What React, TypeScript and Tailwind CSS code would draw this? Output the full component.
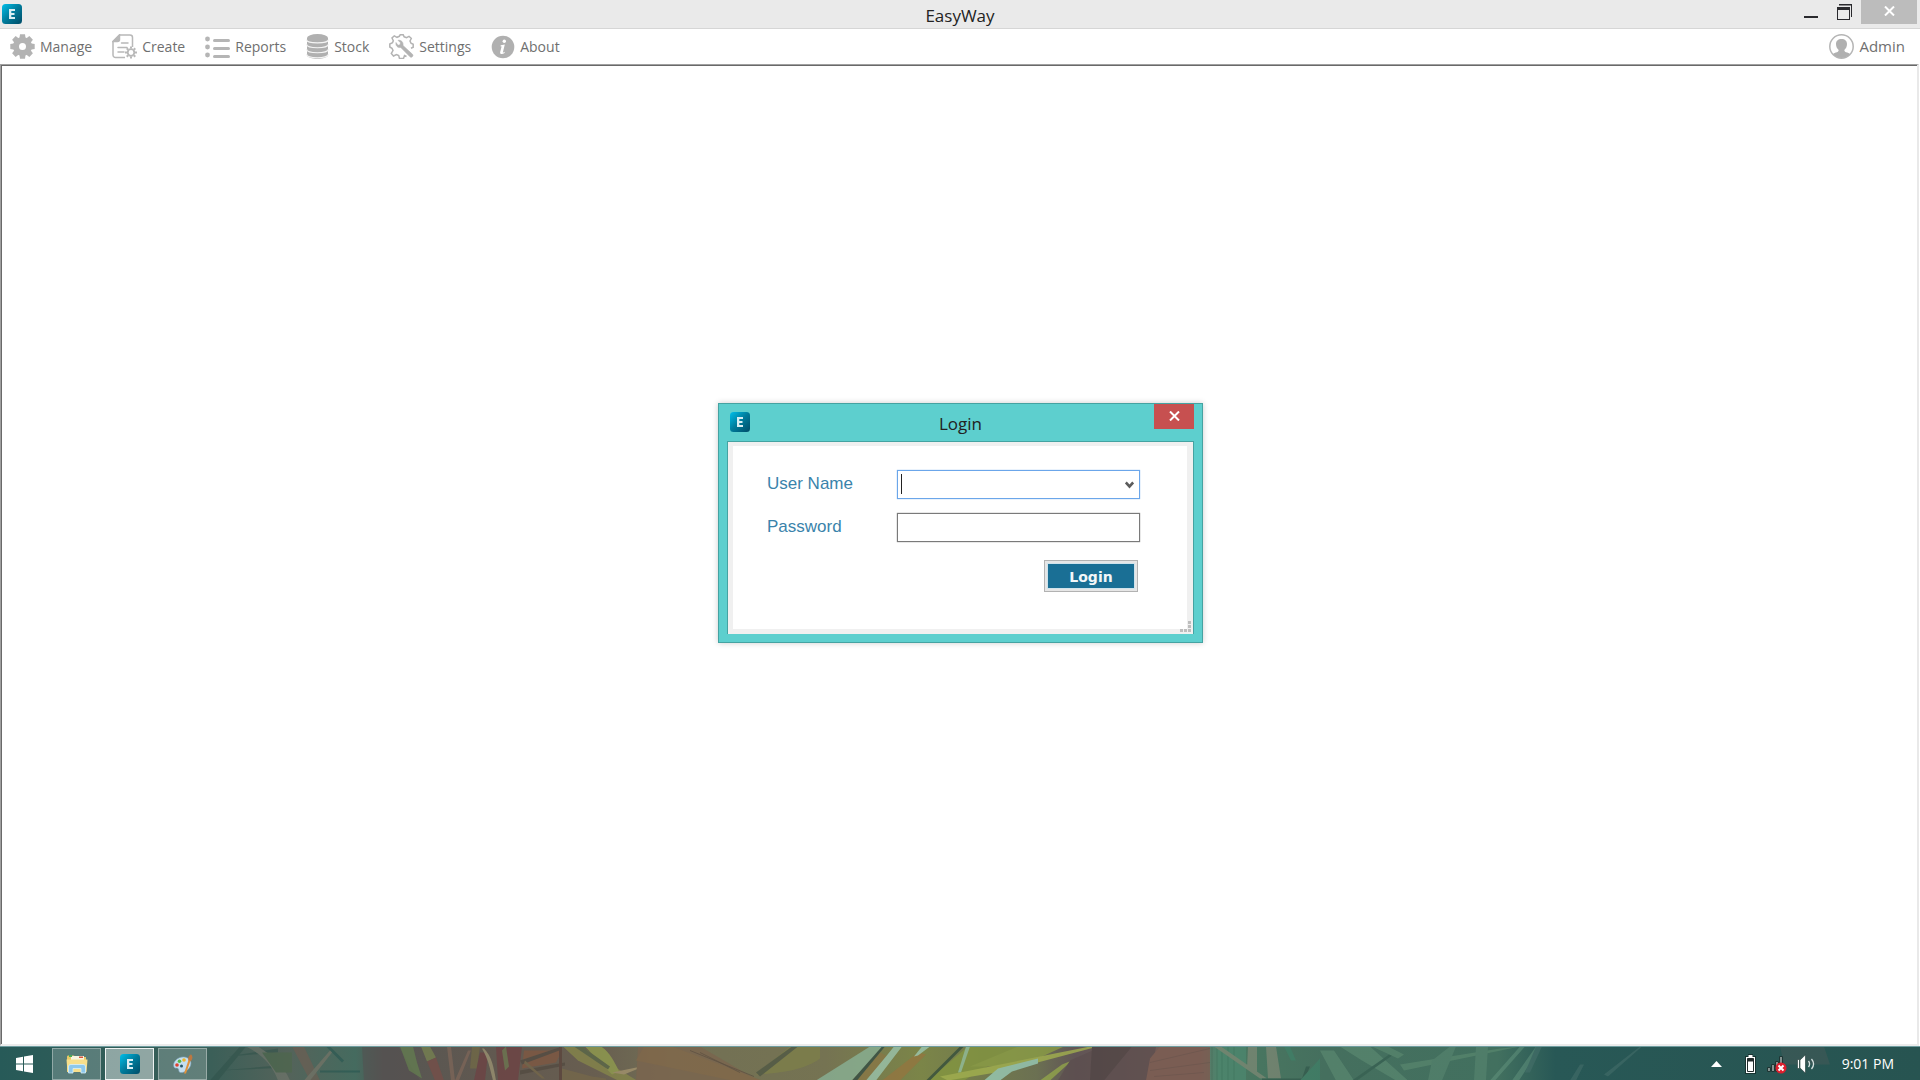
import { useState } from 'react';
import type { ReactNode } from 'react';

const SANS = "font-['Open_Sans','Noto_Sans',sans-serif]";

const AppLogo = () => (
  <svg width="20" height="20" viewBox="0 0 20 20" aria-hidden="true">
    <defs>
      <linearGradient id="logo" x1="0" y1="0" x2="1" y2="1">
        <stop offset="0" stopColor="#00bfea" />
        <stop offset="0.5" stopColor="#007a9a" />
        <stop offset="1" stopColor="#004c68" />
      </linearGradient>
    </defs>
    <rect width="20" height="20" rx="3.5" fill="url(#logo)" />
    <path d="M7 5h6v2H9.300v2h3.200v1.900H9.300v2.200H13V15H7z" fill="#d9eef3" />
  </svg>
);

const teeth = [0, 45, 90, 135, 180, 225, 270, 315];

const ManageIcon = () => (
  <svg width="25" height="25" viewBox="0 0 25 25" fill="#b3b3b3" aria-hidden="true">
    {teeth.map((deg) => (
      <path key={deg} d="M9.300 5 10 .3h5l.7 4.700z" transform={`rotate(${deg} 12.500 12.500)`} />
    ))}
    <circle cx="12.500" cy="12.500" r="6.500" fill="none" stroke="#b3b3b3" strokeWidth="6" />
  </svg>
);

const CreateIcon = () => (
  <svg width="25" height="25" viewBox="0 0 25 25" fill="none" stroke="#b8b8b8" strokeWidth="1.500" aria-hidden="true">
    <path d="M13 23.500H3.500a2.500 2.500 0 0 1-2.500-2.500V7.500L7.500 1H18a2.500 2.500 0 0 1 2.500 2.500V13" />
    <path d="M1 7.500 7.500 1v4.500a2 2 0 0 1-2 2z" fill="#b8b8b8" />
    <path d="M9.500 9H16M6 13.500h9M6 18h6" strokeLinecap="round" />
    <circle cx="19" cy="18.500" r="3.300" strokeWidth="1.800" />
    {teeth.map((deg) => (
      <path key={deg} d="M19 14.500v-2" strokeWidth="2" transform={`rotate(${deg} 19 18.500)`} />
    ))}
  </svg>
);

const ReportsIcon = () => (
  <svg width="25" height="25" viewBox="0 0 25 25" fill="#b5b5b5" aria-hidden="true">
    {[6, 14, 22].map((y) => (
      <g key={y}>
        <circle cx="2.500" cy={y - 1} r="2.400" />
        <rect x="8" y={y - 1} width="17" height="3" rx="1.500" />
      </g>
    ))}
  </svg>
);

const StockIcon = () => (
  <svg width="23" height="25" viewBox="0 0 23 25" aria-hidden="true">
    <path d="M1 4v17c0 5 21 5 21 0V4z" fill="#b0b0b0" />
    <g fill="none" stroke="#f4f4f4" strokeWidth="1.200">
      <path d="M.5 5.500c0 4.500 22 4.500 22 0M.5 10c0 5 22 5 22 0M.5 15c0 5 22 5 22 0M.5 20c0 5 22 5 22 0" />
    </g>
    <ellipse cx="11.500" cy="4" rx="10.500" ry="4" fill="#b0b0b0" />
  </svg>
);

const SettingsIcon = () => (
  <svg width="25" height="25" viewBox="0 0 25 25" fill="none" stroke="#b3b3b3" aria-hidden="true">
    <path
      d="M17.500 22.500l-2-1-1 3h-4l-.8-3-2.200-1L4.500 22 2.300 19.500l1.700-3-1-2.200L.8 13v-3l2.700-1.200.8-2L3 4l2.300-2.200L8 3.300l2.300-1L11.200.8h3l1 2 2.300.8L20 2.300 22.300 4.500 21 7l1 2.300 2.200 1v3l-2.200 1"
      strokeWidth="1.500"
    />
    <path
      d="M7 8.500c-.6 3 1.500 5.500 4.800 5l9.200 9.300c1.500 1.500 4-1 2.500-2.500L14 11.500c.6-3.500-2-5.800-5-5.200l2.500 2.500-.5 2-2 .5z"
      fill="#b3b3b3"
      strokeWidth=".6"
    />
  </svg>
);

const AboutIcon = () => (
  <svg width="24" height="24" viewBox="0 0 24 24" aria-hidden="true">
    <circle cx="12" cy="12" r="11.300" fill="#b0b0b0" />
    <circle cx="13.300" cy="6.200" r="1.700" fill="#fff" />
    <path d="M9.800 10.200l4-.7-2 8.200 2-.9-.3 1.200c-2 1.500-5 1.500-4.300-1l1.400-5.600-1.200-.2z" fill="#fff" />
  </svg>
);

const UserIcon = () => (
  <svg width="25" height="25" viewBox="0 0 25 25" aria-hidden="true">
    <circle cx="12.500" cy="12.500" r="11.700" fill="#fff" stroke="#b5b5b5" strokeWidth="1.500" />
    <path
      d="M12.500 5c3.500 0 5.500 2 5.500 5 0 2.500-1 4.500-2.700 6 .2 1.500 1 2 3 2.600 1.500.5 2.400 1 2.700 1.900-4.500 4.600-12.500 4.600-17 0 .3-.9 1.200-1.400 2.700-1.900 2-.6 2.800-1.100 3-2.600C8 14.500 7 12.500 7 10c0-3 2-5 5.500-5z"
      fill="#b0b0b0"
    />
  </svg>
);

const WindowsIcon = () => (
  <svg width="17" height="18" viewBox="0 0 17 18" fill="#fff" aria-hidden="true">
    <path d="M0 3 7 1.800V8.500H0zM8 1.600 17 0v8.500H8zM0 9.500h7v6.700L0 15zM8 9.500h9V18l-9-1.600z" />
  </svg>
);

const FolderIcon = () => (
  <svg width="22" height="20" viewBox="0 0 22 20" aria-hidden="true">
    <path d="M1 3c0-1 .5-1.500 1.500-1.500H8L9 3h11v15H1z" fill="#e8c866" />
    <path d="M5 2h13v5H5z" fill="#f8f4df" />
    <path d="M3 1h3v2H3z" fill="#49a957" />
    <path d="M13 2.500h4v1.500h-4z" fill="#d8523c" />
    <path d="M.5 5.500h21L20.500 18h-19z" fill="#f7df8b" />
    <path
      d="M2.500 19v-6c0-1.700.8-2.500 2.500-2.500h12c1.700 0 2.500.8 2.500 2.500v6H15v-4.500H7V19z"
      fill="#8dc8ec"
      stroke="#d8f0fb"
      strokeWidth=".8"
    />
  </svg>
);

const PaintIcon = () => (
  <svg width="20" height="20" viewBox="0 0 20 20" aria-hidden="true">
    <path
      d="M1 13C-1 8 5 2.500 11 3c5 .5 8 4 6.500 8.500S11 19 7.500 18.500c-2.500-.4-1-3-2.500-4s-3 .5-4-1.500z"
      fill="#c4dff0"
      stroke="#7fa6c0"
      strokeWidth=".6"
    />
    <circle cx="4" cy="11" r="1.800" fill="#e0412f" />
    <circle cx="6.500" cy="7.300" r="1.800" fill="#57b947" />
    <circle cx="11" cy="6" r="1.800" fill="#f0b429" />
    <circle cx="8.500" cy="12" r="1.500" fill="#28596b" />
    <path d="M11 19.500 15.500 6l2 .7L13 19.500z" fill="#e2923a" />
    <path d="M15.300 6.500c-.6-2.500 0-4.500 2.700-6.300 1.800 1.800 2 4.500 0 6.800z" fill="#bd7841" />
  </svg>
);

const Wallpaper = () => (
  <svg
    className="absolute inset-0 h-full w-full"
    viewBox="0 0 1920 34"
    preserveAspectRatio="xMidYMid slice"
    aria-hidden="true"
  >
    <defs>
      <linearGradient id="wall" x1="0" x2="1">
        <stop offset="0" stopColor="#275a58" />
        <stop offset="0.110" stopColor="#3b5f58" />
        <stop offset="0.150" stopColor="#54635a" />
        <stop offset="0.185" stopColor="#456b5f" />
        <stop offset="0.200" stopColor="#565653" />
        <stop offset="0.250" stopColor="#605850" />
        <stop offset="0.310" stopColor="#685e50" />
        <stop offset="0.350" stopColor="#727055" />
        <stop offset="0.430" stopColor="#757352" />
        <stop offset="0.480" stopColor="#7b8548" />
        <stop offset="0.540" stopColor="#6b7052" />
        <stop offset="0.560" stopColor="#615556" />
        <stop offset="0.600" stopColor="#715b55" />
        <stop offset="0.625" stopColor="#715b55" />
        <stop offset="0.635" stopColor="#4a7961" />
        <stop offset="0.690" stopColor="#456f5e" />
        <stop offset="0.780" stopColor="#42705f" />
        <stop offset="0.810" stopColor="#285856" />
        <stop offset="1" stopColor="#275451" />
      </linearGradient>
    </defs>
    <rect width="1920" height="34" fill="url(#wall)" />

    {/* left: dark blades */}
    <g opacity=".5">
      <path d="M210 34 240 0h6l-28 34zM228 10l50-8v4zM220 24l70-6v3z" fill="#2e5149" />
      <path d="M246 0h12c16 10 26 20 32 34h-12C272 18 262 8 246 0z" fill="#7a7b70" />
      <path d="M262 6h30v20h-16z" fill="#4c6847" />
      <path d="M292 0h12l16 34h-10z" fill="#785c50" />
      <path d="M320 24h40v2h-40zM330 0l14 14-2 2-16-16z" fill="#21534f" />
      <path d="M362 0h36l22 34h-56z" fill="#554f50" />
      <path d="M304 34 330 4l2 2-22 28z" fill="#87796b" />
    </g>

    {/* red and green stalks */}
    <g opacity=".65">
      <path d="M400 0h13l4 16 5 16-13-8z" fill="#66844f" />
      <path d="M421 0h9l6 11-9 4z" fill="#7c8a50" />
      <path d="M427 15l9-4 8 23h-9z" fill="#7c4d47" />
      <path d="M447 0h4l4 34h-4zM455 34 468 4h3l-12 30z" fill="#83685a" />
      <path d="M472 0h8l-3 22h-7z" fill="#746c44" />
      <path d="M474 34 480 6h8l-3 28zM496 0h26l-4 34h-20z" fill="#703e42" />
      <path d="M484 2c8 8 10 20 12 32h-3c-3-12-5-22-11-32z" fill="#a59d78" />
      <path d="M502 4l4-4 3 20-4 4z" fill="#6f7b4f" />
      <path d="M524 4h38l-6 12-34 6z" fill="#85573f" />
      <path d="M520 14 562 0v3l-40 15zM520 24l45-8v3l-45 9z" fill="#50483f" />
      <path d="M559 0h3v34h-3z" fill="#594039" />
      <path d="M525 14l20 18h-3l-18-15zM562 22l30 8 14 2v2h-44z" fill="#786a49" />
    </g>

    {/* centre: bright leaves */}
    <g opacity=".75">
      <path d="M563 0h18l56 34h-19l-40-20z" fill="#87884a" />
      <path d="M585 0h16c8 5 13 14 18 25l-7 3z" fill="#93a04e" />
      <path d="M574 0h8l28 20-2 3z" fill="#596847" />
      <path d="M612 26l34-7-22 9z" fill="#a6956f" />
      <path d="M638 0h62l58 34H636z" fill="#7c644e" />
      <path d="M636 14 644 0h28l90 34h-30z" fill="#836749" />
      <path d="M756 28 790 0h30v12c-14 10-32 14-64 16z" fill="#7e8049" />
      <path d="M756 26 792 0h6l-38 30z" fill="#4e5744" />
      <path d="M690 4l64 26M700 6l40 20" stroke="#58483c" strokeWidth=".8" />
      <path d="M816 34 870 0h14l-32 34z" fill="#8ab59a" />
      <path d="M852 34 880 6l8 4-22 24z" fill="#8a7745" />
      <path d="M852 34 882 0h3l-28 34z" fill="#2f4a43" />
      <path d="M866 34 886 10l8-10h8l-26 34z" fill="#9dc9b3" />
      <path d="M882 34 918 6l8 2-26 26z" fill="#95753f" />
      <path d="M914 10 922 0h8l-12 9z" fill="#a0ccb8" />
      <path d="M928 34 968 0h52l-56 34z" fill="#84973f" />
      <path d="M926 34 960 0h4l-34 34z" fill="#314b3b" />
      <path d="M958 26 966 0h4l-9 26z" fill="#95c2a1" />
      <path d="M970 20h50l44-20h-46z" fill="#8da044" />
      <path d="M940 30 1090 0h8l-90 24-60 10z" fill="#a6b54e" />
      <path d="M984 34l14-12 40-10v5l-26 8-12 9z" fill="#9bd0bd" />
      <path d="M1040 34 1062 18l10-4-22 20z" fill="#95a94a" />
      <path d="M1070 14 1102 0h54l-6 34h-92z" fill="#5c4e4f" />
      <path d="M1092 0h40l-28 34h-14z" fill="#4f4444" />
      <path d="M1150 12 1160 0h50v34h-64z" fill="#7e5e53" />
      <path d="M1150 24l60-8M1150 16l60-14M1154 30l50-4" stroke="#625049" strokeWidth=".5" />
    </g>

    {/* right: green fan */}
    <g opacity=".45">
      <path d="M1210 0h36v34h-36z" fill="#4f9279" />
      <path d="M1212 0v34M1217 0v34M1222 0v34M1228 0v34M1234 0v34" stroke="#34705d" strokeWidth=".7" />
      <path d="M1214 0h7l46 32h-7zM1248 0h9v28l-10-5zM1266 0h10l5 32h-13z" fill="#a09482" />
      <path d="M1262 32h40l4-12h4l-6 14h-42z" fill="#274b41" />
      <path d="M1284 0h6l6 14h-5zM1300 34 1320 12v22z" fill="#3b896d" />
      <path d="M1320 4h14l20 30h-18zM1340 0h30l38 34h-12L1362 14z" fill="#66967a" />
      <path d="M1352 34 1392 6l3 1-38 27z" fill="#2d5548" />
      <path d="M1372 0h16l16 8-6 4zM1400 18 1500 2l20-2-116 24z" fill="#659477" />
      <path d="M1432 14 1450 0h6l-14 34h-14zM1476 0h12l-2 34h-12z" fill="#5f8d76" />
      <path d="M1490 34 1520 0h5l-30 34zM1512 34 1536 0h5l-22 34z" fill="#699b83" />
      <path d="M1536 0h6l-12 26h-5zM1604 28 1640 0h2l-34 30zM1570 34 1580 18h4l-8 16z" fill="#4c7470" />
      <path d="M1780 0h44l6 18h-46z" fill="#4c5c59" />
    </g>
  </svg>
);

const menuItems: { label: string; icon: ReactNode }[] = [
  { label: 'Manage', icon: <ManageIcon /> },
  { label: 'Create', icon: <CreateIcon /> },
  { label: 'Reports', icon: <ReportsIcon /> },
  { label: 'Stock', icon: <StockIcon /> },
  { label: 'Settings', icon: <SettingsIcon /> },
  { label: 'About', icon: <AboutIcon /> },
];

const CloseMark = () => (
  <svg width="11" height="10" viewBox="0 0 11 10" stroke="#fff" strokeWidth="2">
    <path d="M1 .5 10 9.500M10 .5 1 9.500" />
  </svg>
);

const TitleBar = () => (
  <header className="grid h-[29px] grid-cols-[1fr_auto_1fr] border-b border-[#d6d6d6] bg-[#eaeaea]">
    <div className="pt-1 pl-0.5">
      <AppLogo />
    </div>
    <h1 className="pt-1 text-[17px] leading-6 text-[#222]">EasyWay</h1>
    <div className="flex items-start justify-end pr-[3px]">
      <button type="button" aria-label="Minimize" className="flex h-6 w-8 items-center justify-center">
        <svg width="14" height="16" viewBox="0 0 14 16">
          <path d="M0 12h14v2H0z" fill="#2a2a2e" />
        </svg>
      </button>
      <button type="button" aria-label="Restore" className="flex h-6 w-[34px] items-center justify-center">
        <svg width="15" height="16" viewBox="0 0 15 16" fill="#2a2a2e">
          <path d="M2 0h13v13h-1V1.500H2zM0 3h13v13H0zM1 6v9h11V6z" fillRule="evenodd" />
        </svg>
      </button>
      <button type="button" aria-label="Close" className="flex h-6 w-14 items-center justify-center bg-[#bcbcbc] pb-0.5">
        <CloseMark />
      </button>
    </div>
  </header>
);

const MenuBar = () => (
  <nav className="flex h-[35px] items-center justify-between bg-white pr-[15px] pl-2.5 text-[#6f6f6f]">
    <div className="flex items-center gap-5 text-sm">
      {menuItems.map((item) => (
        <button key={item.label} type="button" className="flex items-center gap-[5px]">
          {item.icon}
          {item.label}
        </button>
      ))}
    </div>
    <button type="button" className="flex items-center gap-[5px] text-[15px]">
      <UserIcon />
      Admin
    </button>
  </nav>
);

const LoginDialog = () => {
  const [userName, setUserName] = useState('');
  const [password, setPassword] = useState('');

  return (
    <section
      aria-label="Login"
      className="w-[485px] border border-[#45a3a2] bg-[#5dcfce] px-2 pb-2 shadow-[0_0_6px_rgba(0,0,0,0.2)]"
    >
      <div className="grid h-[37px] grid-cols-[1fr_auto_1fr]">
        <div className="pt-2 pl-[3px]">
          <AppLogo />
        </div>
        <h2 className="pt-2 text-[17px] leading-6 text-[#222]">Login</h2>
        <button
          type="button"
          aria-label="Close login"
          className="flex h-[25px] w-10 items-center justify-center justify-self-end bg-[#c75050] pb-0.5"
        >
          <CloseMark />
        </button>
      </div>

      <div className="relative border border-b-0 border-[#45a3a2] bg-[#f0f0f0] pt-1 pr-1.5 pb-[5px] pl-[5px]">
        <form
          className="grid h-[183px] grid-cols-[130px_243px] content-start bg-white pt-6 pl-[34px] font-['Liberation_Sans',Arial,sans-serif] text-[17px] text-[#3a83ab]"
          onSubmit={(e) => e.preventDefault()}
        >
          <label htmlFor="user" className="leading-7">User Name</label>
          <div className="relative mb-3.5">
            <select
              id="user"
              value={userName}
              onChange={(e) => setUserName(e.target.value)}
              className="block h-[29px] w-full appearance-none border border-[#6ba6ea] bg-white px-1 text-black shadow-[0_0_1px_#7eb4ea] outline-none"
            >
              <option value=""></option>
            </select>
            <span className="pointer-events-none absolute top-1 left-1 h-5 w-px bg-[#222]" />
            <svg className="pointer-events-none absolute top-[11px] right-1.5" width="9" height="8" viewBox="0 0 9 8">
              <path d="M.8 1.500 4.500 5.500 8.200 1.500" fill="none" stroke="#5c5c5c" strokeWidth="2.600" />
            </svg>
          </div>
          <label htmlFor="password" className="leading-7">Password</label>
          <input
            id="password"
            type="password"
            value={password}
            onChange={(e) => setPassword(e.target.value)}
            className="mb-[18px] h-[29px] border border-[#7a7a7a] bg-white px-1 text-black shadow-[0_0_1px_#7a7a7a] outline-none"
          />
          <button
            type="submit"
            className="col-start-2 mr-0.5 h-8 w-[94px] justify-self-end border border-[#b2b2b2] bg-[#e6e6e6] p-0.5 font-['DejaVu_Sans',sans-serif] text-sm font-bold text-[#f2f7f9]"
          >
            <span className="flex h-full items-center justify-center border border-[#cfe3ec] bg-[#1a6f95] pt-0.5">
              Login
            </span>
          </button>
        </form>
        <svg className="absolute right-0.5 bottom-0.5" width="11" height="11" viewBox="0 0 11 11" fill="#bdbdbd">
          <path d="M8 0h3v3H8zM8 4h3v3H8zM8 8h3v3H8zM4 8h3v3H4zM0 8h3v3H0z" />
        </svg>
      </div>
    </section>
  );
};

const TaskButton = ({ label, active, children }: { label: string; active?: boolean; children: ReactNode }) => (
  <button
    type="button"
    aria-label={label}
    className={
      active
        ? 'flex h-8 w-[49px] items-center justify-center border border-white/85 bg-white/45'
        : 'flex h-8 w-[49px] items-center justify-center border border-white/35 bg-white/20'
    }
  >
    {children}
  </button>
);

const Taskbar = () => (
  <footer className="relative h-[34px] overflow-hidden border-t border-[#6f9da0]">
    <Wallpaper />
    <div className="relative flex h-full items-center justify-between">
      <div className="flex items-center gap-1">
        <button type="button" aria-label="Start" className="flex h-8 w-12 items-center justify-center">
          <WindowsIcon />
        </button>
        <TaskButton label="File Explorer"><FolderIcon /></TaskButton>
        <TaskButton label="EasyWay" active><AppLogo /></TaskButton>
        <TaskButton label="Paint"><PaintIcon /></TaskButton>
      </div>
      <div className="flex items-center pr-[26px]">
        <button type="button" aria-label="Show hidden icons" className="mr-[22px]">
          <svg width="11" height="6" viewBox="0 0 11 6"><path d="M0 6 5.500 0 11 6z" fill="#fff" /></svg>
        </button>
        <svg className="mr-2.5" width="13" height="20" viewBox="0 0 13 20" aria-label="Battery">
          <path d="M4 0h5v2h3v18H1V2h3z" fill="#173330" />
          <path d="M4.500 1h4v2H11v16H2V3h2.500z" fill="#fff" />
          <path d="M3.500 4.500h6v3h-6z" fill="#222b2b" />
          <path d="M3.500 4.500h6v13h-6z" fill="none" stroke="#222b2b" />
        </svg>
        <svg className="mr-2.5" width="20" height="20" viewBox="0 0 20 20" aria-label="No network">
          <path
            d="M.5 13.500h3v4h-3zM4.500 10.500h3v7h-3zM8.500 7.500h3v10h-3zM12.500 2.500h3v15h-3z"
            fill="#84918f"
            stroke="#1d3533"
          />
          <circle cx="14" cy="14" r="5.500" fill="#dc1f2e" />
          <path d="M11.500 11.500l5 5M16.500 11.500l-5 5" stroke="#fff" strokeWidth="2" />
        </svg>
        <svg className="mr-[26px]" width="19" height="20" viewBox="0 0 19 20" aria-label="Volume">
          <path d="M.5 5.500h2v9h-2z" fill="#fff" stroke="#1d3533" strokeWidth=".6" />
          <path d="M3 6 8.500.8v18.400L3 14z" fill="#fff" stroke="#1d3533" strokeWidth=".6" />
          <path d="M11.500 7c1.300 1.800 1.300 4.200 0 6M14.500 5c2.500 3 2.500 7 0 10" fill="none" stroke="#d5e0df" strokeWidth="1.300" />
        </svg>
        <time className="text-sm text-white">9:01 PM</time>
      </div>
    </div>
  </footer>
);

const App = () => (
  <div className={`flex min-h-screen flex-col bg-white ${SANS}`}>
    <TitleBar />
    <MenuBar />
    <main className="mr-px flex flex-1 items-center justify-center border-t border-r-2 border-b-2 border-l border-t-[#a0a0a0] border-r-[#e9e9e9] border-b-[#ececec] border-l-[#a0a0a0] bg-white pb-[63px] pl-[3px] shadow-[inset_1px_1px_0_#696969]">
      <LoginDialog />
    </main>
    <Taskbar />
  </div>
);

export default App;
